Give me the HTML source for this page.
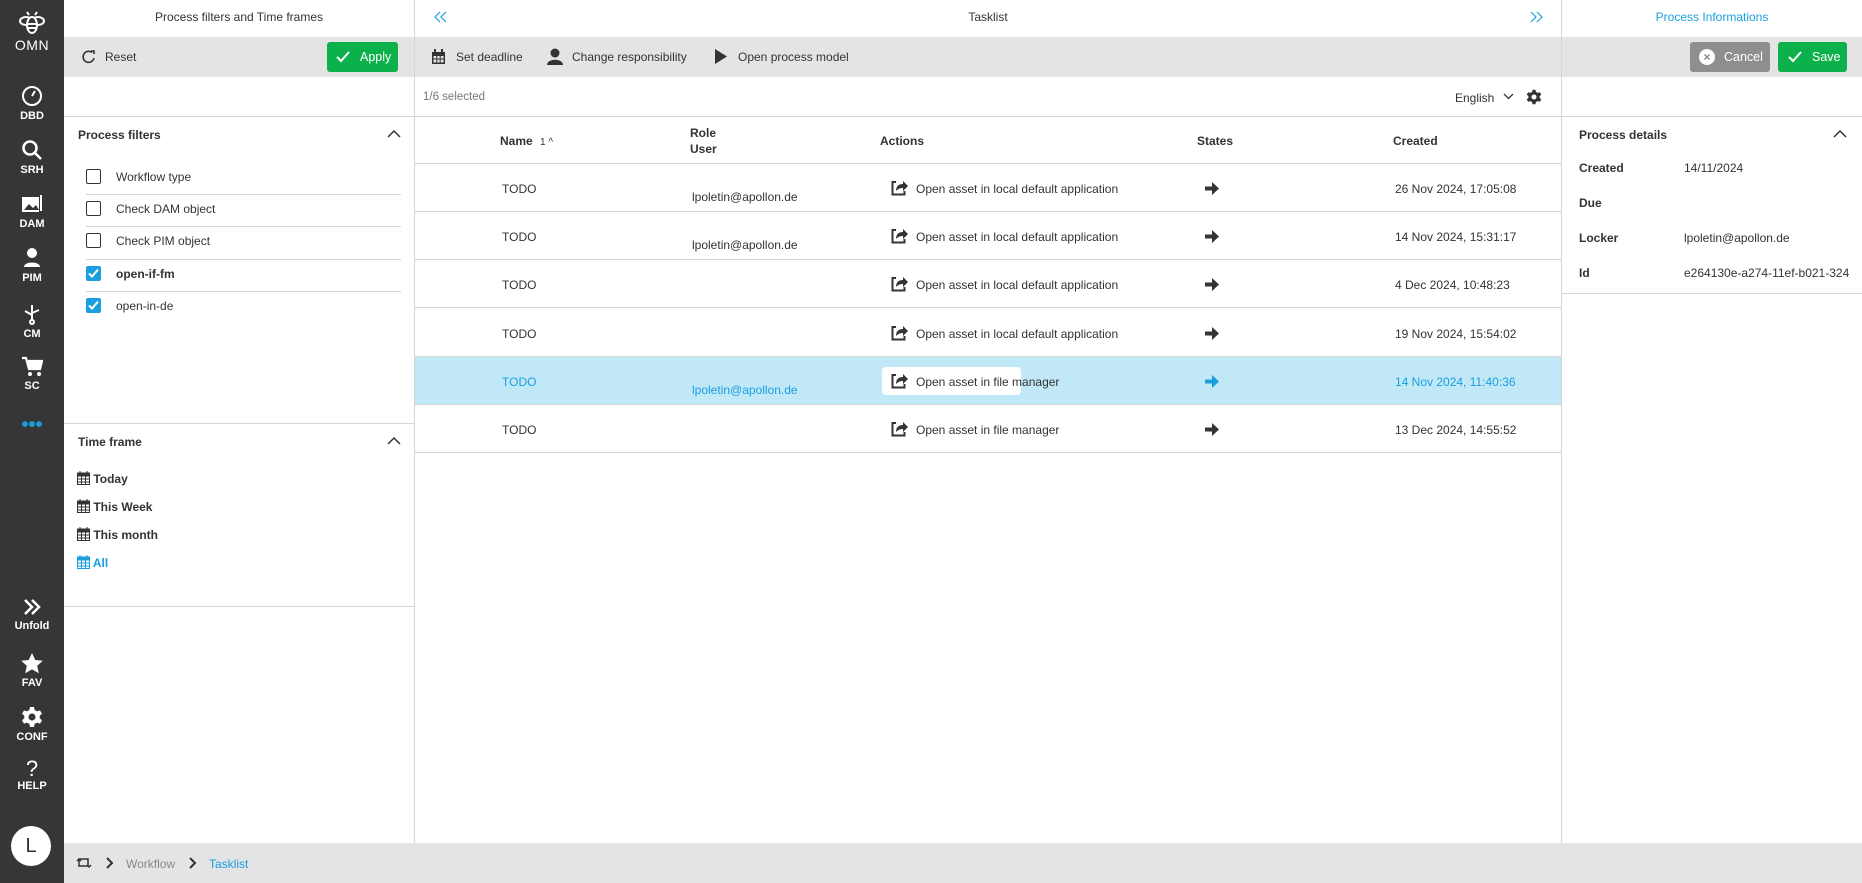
<!DOCTYPE html>
<html><head><meta charset="utf-8"><style>
*{box-sizing:border-box;margin:0;padding:0}
body{width:1862px;height:883px;overflow:hidden;font-family:"Liberation Sans",sans-serif;font-size:12px;color:#333;background:#fff;position:relative}
.a{position:absolute}
.sb{left:0;top:0;width:64px;height:883px;background:#363636;color:#fff}
.ni{position:absolute;left:0;width:64px;text-align:center;font-size:11px;font-weight:bold;color:#fff}
.ni svg{display:block;margin:0 auto 3px}
.gray{background:#e4e4e4}
.hl{height:1px;background:#d6d6d6}
.vl{width:1px;background:#d6d6d6}
.btn{border-radius:3px;color:#fff;font-size:12.5px;display:flex;align-items:center}
.cb{width:15px;height:15px;border:1.5px solid #333;border-radius:2px;position:absolute;left:86px}
.cbc{background:#1a9ee0;border:none}
.b{font-weight:bold}
.row{position:absolute;left:415px;width:1146px;height:48px;border-bottom:1px solid #d6d6d6}
.row span{position:absolute}
</style></head><body>
<div class="a sb">
 <div class="ni" style="top:10px">
  <svg width="28" height="26" viewBox="0 0 28 26" fill="none" stroke="#fff" stroke-width="2"><ellipse cx="8" cy="11" rx="6" ry="4"/><ellipse cx="20" cy="11" rx="6" ry="4"/><ellipse cx="14" cy="15" rx="5" ry="8" fill="#363636"/><path d="M10 14h8M10 18h8"/><path d="M11 5l-2-3M17 5l2-3"/></svg>
  <div style="font-size:14px;font-weight:normal;letter-spacing:.5px;margin-top:-2px">OMN</div></div>
 <div class="ni" style="top:85px"><svg width="22" height="22" viewBox="0 0 22 22" fill="none" stroke="#fff" stroke-width="2"><circle cx="11" cy="11" r="9"/><path d="M11 11l3-5"/></svg>DBD</div>
 <div class="ni" style="top:139px"><svg width="22" height="22" viewBox="0 0 22 22" fill="none" stroke="#fff" stroke-width="2.5"><circle cx="9" cy="9" r="6.5"/><path d="M14 14l6 6"/></svg>SRH</div>
 <div class="ni" style="top:193px"><svg width="22" height="22" viewBox="0 0 22 22"><rect x="1" y="4" width="17" height="15" fill="#fff"/><path d="M3 17l5-6 4 4 3-3 3 5z" fill="#363636"/><rect x="19" y="2" width="2" height="16" fill="#fff"/></svg>DAM</div>
 <div class="ni" style="top:247px"><svg width="22" height="22" viewBox="0 0 22 22"><circle cx="11" cy="6" r="5" fill="#fff"/><path d="M3 20c0-6 16-6 16 0z" fill="#fff"/></svg>PIM</div>
 <div class="ni" style="top:303px"><svg width="22" height="22" viewBox="0 0 22 22" fill="none" stroke="#fff" stroke-width="2"><path d="M11 2v16M11 12l-7-4M11 10l7-3"/><circle cx="11" cy="19" r="2"/></svg>CM</div>
 <div class="ni" style="top:355px"><svg width="22" height="22" viewBox="0 0 22 22"><path d="M1 3h4l3 11h11l2-8H7" fill="none" stroke="#fff" stroke-width="2.2"/><path d="M6 6h15l-2 8H8z" fill="#fff"/><circle cx="9" cy="19" r="2" fill="#fff"/><circle cx="18" cy="19" r="2" fill="#fff"/></svg>SC</div>
 <div class="ni" style="top:414px;color:#1a9ee0;font-size:20px">•••</div>
 <div class="ni" style="top:597px"><svg width="22" height="20" viewBox="0 0 22 20" fill="none" stroke="#fff" stroke-width="2.5"><path d="M4 3l7 7-7 7M11 3l7 7-7 7"/></svg>Unfold</div>
 <div class="ni" style="top:652px"><svg width="24" height="22" viewBox="0 0 24 22"><path d="M12 1l3.3 7 7.5.8-5.6 5 1.6 7.4L12 17.4 5.2 21.2l1.6-7.4-5.6-5 7.5-.8z" fill="#fff"/></svg>FAV</div>
 <div class="ni" style="top:706px"><svg width="22" height="22" viewBox="0 0 22 22"><path d="M9 1h4l.6 3 2.5 1.4 2.9-1 2 3.4-2.3 2v2.4l2.3 2-2 3.4-2.9-1L13.6 18l-.6 3H9l-.6-3-2.5-1.4-2.9 1-2-3.4 2.3-2V9.8l-2.3-2 2-3.4 2.9 1L8.4 4z" fill="#fff"/><circle cx="11" cy="11" r="3.5" fill="#363636"/></svg>CONF</div>
 <div class="ni" style="top:758px"><div style="font-size:22px;font-weight:normal;line-height:22px">?</div>HELP</div>
 <div class="a" style="left:11px;top:826px;width:40px;height:40px;border-radius:50%;background:#fff;color:#333;font-size:20px;text-align:center;line-height:40px">L</div>
</div>

<div class="a gray" style="left:64px;top:37px;width:1798px;height:40px"></div>
<div class="a gray" style="left:64px;top:843px;width:1798px;height:40px"></div>
<div class="a vl" style="left:414px;top:0;height:843px"></div>
<div class="a vl" style="left:1561px;top:0;height:843px"></div>
<div class="a hl" style="left:64px;top:116px;width:1798px"></div>

<div class="a" style="left:64px;top:10px;width:350px;text-align:center">Process filters and Time frames</div>
<svg class="a" style="left:81px;top:49px" width="16" height="16" viewBox="0 0 16 16" fill="none" stroke="#333" stroke-width="1.6"><path d="M13 9a5.5 5.5 0 1 1-2-5.5"/><path d="M10 2h3v3"/></svg>
<div class="a" style="left:105px;top:50px">Reset</div>
<div class="a btn" style="left:327px;top:42px;width:71px;height:30px;background:#0db14b;padding-left:8px"><svg width="16" height="14" viewBox="0 0 16 14" fill="none" stroke="#fff" stroke-width="2"><path d="M2 7l4 4 8-9"/></svg><span style="margin-left:9px">Apply</span></div>

<div class="a b" style="left:78px;top:128px">Process filters</div>
<svg class="a" style="left:387px;top:129px" width="14" height="9" viewBox="0 0 14 9" fill="none" stroke="#333" stroke-width="1.5"><path d="M1 8l6-6 6 6"/></svg>
<div class="cb" style="top:169px"></div><div class="a" style="left:116px;top:170px">Workflow type</div>
<div class="a hl" style="left:86px;top:194px;width:315px"></div>
<div class="cb" style="top:201px"></div><div class="a" style="left:116px;top:202px">Check DAM object</div>
<div class="a hl" style="left:86px;top:226px;width:315px"></div>
<div class="cb" style="top:233px"></div><div class="a" style="left:116px;top:234px">Check PIM object</div>
<div class="a hl" style="left:86px;top:259px;width:315px"></div>
<div class="cb cbc" style="top:266px"><svg width="15" height="15" viewBox="0 0 15 15" fill="none" stroke="#fff" stroke-width="2"><path d="M3 7.5l3 3 6-7"/></svg></div><div class="a b" style="left:116px;top:267px">open-if-fm</div>
<div class="a hl" style="left:86px;top:291px;width:315px"></div>
<div class="cb cbc" style="top:298px"><svg width="15" height="15" viewBox="0 0 15 15" fill="none" stroke="#fff" stroke-width="2"><path d="M3 7.5l3 3 6-7"/></svg></div><div class="a" style="left:116px;top:299px">open-in-de</div>

<div class="a hl" style="left:64px;top:423px;width:350px"></div>
<div class="a b" style="left:78px;top:435px">Time frame</div>
<svg class="a" style="left:387px;top:436px" width="14" height="9" viewBox="0 0 14 9" fill="none" stroke="#333" stroke-width="1.5"><path d="M1 8l6-6 6 6"/></svg>
<div class="a b" style="left:77px;top:471px"><svg width="13" height="14" viewBox="0 0 13 14" style="vertical-align:-2px"><rect x="0.5" y="2" width="12" height="11.5" fill="none" stroke="#333"/><path d="M0 2h13v3H0zM3 0v3M10 0v3M0 8h13M0 11h13M4.5 5v9M8.5 5v9" stroke="#333" fill="#333"/></svg> Today</div>
<div class="a b" style="left:77px;top:499px"><svg width="13" height="14" viewBox="0 0 13 14" style="vertical-align:-2px"><rect x="0.5" y="2" width="12" height="11.5" fill="none" stroke="#333"/><path d="M0 2h13v3H0zM3 0v3M10 0v3M0 8h13M0 11h13M4.5 5v9M8.5 5v9" stroke="#333" fill="#333"/></svg> This Week</div>
<div class="a b" style="left:77px;top:527px"><svg width="13" height="14" viewBox="0 0 13 14" style="vertical-align:-2px"><rect x="0.5" y="2" width="12" height="11.5" fill="none" stroke="#333"/><path d="M0 2h13v3H0zM3 0v3M10 0v3M0 8h13M0 11h13M4.5 5v9M8.5 5v9" stroke="#333" fill="#333"/></svg> This month</div>
<div class="a b" style="left:77px;top:555px;color:#1a9ee0"><svg width="13" height="14" viewBox="0 0 13 14" style="vertical-align:-2px"><rect x="0.5" y="2" width="12" height="11.5" fill="none" stroke="#1a9ee0"/><path d="M0 2h13v3H0zM3 0v3M10 0v3M0 8h13M0 11h13M4.5 5v9M8.5 5v9" stroke="#1a9ee0" fill="#1a9ee0"/></svg> All</div>
<div class="a hl" style="left:64px;top:606px;width:350px"></div>

<svg class="a" style="left:434px;top:11px" width="14" height="12" viewBox="0 0 14 12" fill="none" stroke="#1a9ee0" stroke-width="1.2"><path d="M6 1L1 6l5 5M12 1L7 6l5 5"/></svg>
<div class="a" style="left:415px;top:10px;width:1146px;text-align:center">Tasklist</div>
<svg class="a" style="left:1529px;top:11px" width="14" height="12" viewBox="0 0 14 12" fill="none" stroke="#1a9ee0" stroke-width="1.2"><path d="M2 1l5 5-5 5M8 1l5 5-5 5"/></svg>
<svg class="a" style="left:431px;top:49px" width="15" height="16" viewBox="0 0 15 16"><rect x="1" y="3" width="13" height="12" fill="#333"/><path d="M4 0v4M11 0v4" stroke="#333" stroke-width="2"/><rect x="2.5" y="7" width="10" height="6.5" fill="#e4e4e4"/><path d="M2.5 10h10M5.8 7v7M9.2 7v7" stroke="#333"/></svg>
<div class="a" style="left:456px;top:50px">Set deadline</div>
<svg class="a" style="left:547px;top:48px" width="16" height="17" viewBox="0 0 16 17"><circle cx="8" cy="5" r="4.5" fill="#333"/><path d="M0 17c0-7 16-7 16 0z" fill="#333"/></svg>
<div class="a" style="left:572px;top:50px">Change responsibility</div>
<svg class="a" style="left:715px;top:49px" width="12" height="15" viewBox="0 0 12 15"><path d="M0 0l12 7.5L0 15z" fill="#333"/></svg>
<div class="a" style="left:738px;top:50px">Open process model</div>
<div class="a" style="left:423px;top:91px;color:#777;font-size:11.5px">1/6 selected</div>
<div class="a" style="left:1455px;top:91px">English</div>
<svg class="a" style="left:1503px;top:93px" width="11" height="7" viewBox="0 0 11 7" fill="none" stroke="#333" stroke-width="1.3"><path d="M1 1l4.5 4.5L10 1"/></svg>
<svg class="a" style="left:1526px;top:89px" width="16" height="16" viewBox="0 0 22 22"><path d="M9 1h4l.6 3 2.5 1.4 2.9-1 2 3.4-2.3 2v2.4l2.3 2-2 3.4-2.9-1L13.6 18l-.6 3H9l-.6-3-2.5-1.4-2.9 1-2-3.4 2.3-2V9.8l-2.3-2 2-3.4 2.9 1L8.4 4z" fill="#333"/><circle cx="11" cy="11" r="3.5" fill="#fff"/></svg>

<div class="row" style="top:116px">
 <span class="b" style="left:85px;top:18px">Name <span style="position:static;font-weight:normal;font-size:10px;margin-left:4px">1 ^</span></span>
 <span class="b" style="left:275px;top:9px;line-height:16px">Role<br>User</span>
 <span class="b" style="left:465px;top:18px">Actions</span>
 <span class="b" style="left:782px;top:18px">States</span>
 <span class="b" style="left:978px;top:18px">Created</span>
</div>

<div class="row" style="top:164px"><span style="left:87px;top:18px">TODO</span><span style="left:277px;top:26px">lpoletin@apollon.de</span><span style="left:476px;top:16px"><svg width="17" height="16" viewBox="0 0 17 16"><path d="M5 2H1.5v12.5h12V11" fill="none" stroke="#333" stroke-width="2"/><path d="M5 11c0-5 3-7 7-7V1l5 5-5 5V8c-3 0-5 1-7 3z" fill="#333"/></svg></span><span style="left:501px;top:18px">Open asset in local default application</span><span style="left:790px;top:18px"><svg width="14" height="13" viewBox="0 0 14 13"><path d="M0 4.5h7V0l7 6.5L7 13V8.5H0z" fill="#333"/></svg></span><span style="left:980px;top:18px">26 Nov 2024, 17:05:08</span></div>
<div class="row" style="top:212px"><span style="left:87px;top:18px">TODO</span><span style="left:277px;top:26px">lpoletin@apollon.de</span><span style="left:476px;top:16px"><svg width="17" height="16" viewBox="0 0 17 16"><path d="M5 2H1.5v12.5h12V11" fill="none" stroke="#333" stroke-width="2"/><path d="M5 11c0-5 3-7 7-7V1l5 5-5 5V8c-3 0-5 1-7 3z" fill="#333"/></svg></span><span style="left:501px;top:18px">Open asset in local default application</span><span style="left:790px;top:18px"><svg width="14" height="13" viewBox="0 0 14 13"><path d="M0 4.5h7V0l7 6.5L7 13V8.5H0z" fill="#333"/></svg></span><span style="left:980px;top:18px">14 Nov 2024, 15:31:17</span></div>
<div class="row" style="top:260px"><span style="left:87px;top:18px">TODO</span><span style="left:476px;top:16px"><svg width="17" height="16" viewBox="0 0 17 16"><path d="M5 2H1.5v12.5h12V11" fill="none" stroke="#333" stroke-width="2"/><path d="M5 11c0-5 3-7 7-7V1l5 5-5 5V8c-3 0-5 1-7 3z" fill="#333"/></svg></span><span style="left:501px;top:18px">Open asset in local default application</span><span style="left:790px;top:18px"><svg width="14" height="13" viewBox="0 0 14 13"><path d="M0 4.5h7V0l7 6.5L7 13V8.5H0z" fill="#333"/></svg></span><span style="left:980px;top:18px">4 Dec 2024, 10:48:23</span></div>
<div class="row" style="top:309px"><span style="left:87px;top:18px">TODO</span><span style="left:476px;top:16px"><svg width="17" height="16" viewBox="0 0 17 16"><path d="M5 2H1.5v12.5h12V11" fill="none" stroke="#333" stroke-width="2"/><path d="M5 11c0-5 3-7 7-7V1l5 5-5 5V8c-3 0-5 1-7 3z" fill="#333"/></svg></span><span style="left:501px;top:18px">Open asset in local default application</span><span style="left:790px;top:18px"><svg width="14" height="13" viewBox="0 0 14 13"><path d="M0 4.5h7V0l7 6.5L7 13V8.5H0z" fill="#333"/></svg></span><span style="left:980px;top:18px">19 Nov 2024, 15:54:02</span></div>
<div class="row" style="top:357px;background:#c1e8f6;color:#1a9ee0"><span style="left:87px;top:18px">TODO</span><span style="left:277px;top:26px">lpoletin@apollon.de</span><span style="left:467px;top:10px;width:139px;height:28px;background:#fff;border-radius:4px"></span><span style="left:476px;top:16px"><svg width="17" height="16" viewBox="0 0 17 16"><path d="M5 2H1.5v12.5h12V11" fill="none" stroke="#333" stroke-width="2"/><path d="M5 11c0-5 3-7 7-7V1l5 5-5 5V8c-3 0-5 1-7 3z" fill="#333"/></svg></span><span style="left:501px;top:18px;color:#333">Open asset in file manager</span><span style="left:790px;top:18px"><svg width="14" height="13" viewBox="0 0 14 13"><path d="M0 4.5h7V0l7 6.5L7 13V8.5H0z" fill="#1a9ee0"/></svg></span><span style="left:980px;top:18px">14 Nov 2024, 11:40:36</span></div>
<div class="row" style="top:405px"><span style="left:87px;top:18px">TODO</span><span style="left:476px;top:16px"><svg width="17" height="16" viewBox="0 0 17 16"><path d="M5 2H1.5v12.5h12V11" fill="none" stroke="#333" stroke-width="2"/><path d="M5 11c0-5 3-7 7-7V1l5 5-5 5V8c-3 0-5 1-7 3z" fill="#333"/></svg></span><span style="left:501px;top:18px">Open asset in file manager</span><span style="left:790px;top:18px"><svg width="14" height="13" viewBox="0 0 14 13"><path d="M0 4.5h7V0l7 6.5L7 13V8.5H0z" fill="#333"/></svg></span><span style="left:980px;top:18px">13 Dec 2024, 14:55:52</span></div>

<div class="a" style="left:1562px;top:10px;width:300px;text-align:center;color:#1a9ee0">Process Informations</div>
<div class="a btn" style="left:1690px;top:42px;width:80px;height:30px;background:#8e8e8e;padding-left:9px"><svg width="16" height="16" viewBox="0 0 16 16"><circle cx="8" cy="8" r="8" fill="#fff"/><path d="M5.5 5.5l5 5M10.5 5.5l-5 5" stroke="#8e8e8e" stroke-width="1.5"/></svg><span style="margin-left:9px">Cancel</span></div>
<div class="a btn" style="left:1778px;top:42px;width:69px;height:30px;background:#0db14b;padding-left:9px"><svg width="16" height="14" viewBox="0 0 16 14" fill="none" stroke="#fff" stroke-width="2"><path d="M2 7l4 4 8-9"/></svg><span style="margin-left:9px">Save</span></div>
<div class="a b" style="left:1579px;top:128px">Process details</div>
<svg class="a" style="left:1833px;top:129px" width="14" height="9" viewBox="0 0 14 9" fill="none" stroke="#333" stroke-width="1.5"><path d="M1 8l6-6 6 6"/></svg>
<div class="a b" style="left:1579px;top:161px;font-size:12px">Created</div><div class="a" style="left:1684px;top:161px;font-size:12px">14/11/2024</div>
<div class="a b" style="left:1579px;top:196px;font-size:12px">Due</div>
<div class="a b" style="left:1579px;top:231px;font-size:12px">Locker</div><div class="a" style="left:1684px;top:231px;font-size:12px">lpoletin@apollon.de</div>
<div class="a b" style="left:1579px;top:266px;font-size:12px">Id</div><div class="a" style="left:1684px;top:266px;font-size:12px">e264130e-a274-11ef-b021-324</div>
<div class="a hl" style="left:1562px;top:293px;width:300px"></div>

<svg class="a" style="left:76px;top:856px" width="16" height="14" viewBox="0 0 16 14" fill="none" stroke="#333" stroke-width="1.5"><path d="M3 3h9v7H3zM1 5l2-2 2 2M15 9l-2 2-2-2"/></svg>
<svg class="a" style="left:106px;top:857px" width="8" height="12" viewBox="0 0 8 12" fill="none" stroke="#333" stroke-width="2"><path d="M1 1l5 5-5 5"/></svg>
<div class="a" style="left:126px;top:857px;color:#888">Workflow</div>
<svg class="a" style="left:189px;top:857px" width="8" height="12" viewBox="0 0 8 12" fill="none" stroke="#333" stroke-width="2"><path d="M1 1l5 5-5 5"/></svg>
<div class="a" style="left:209px;top:857px;color:#1a9ee0">Tasklist</div>
</body></html>
